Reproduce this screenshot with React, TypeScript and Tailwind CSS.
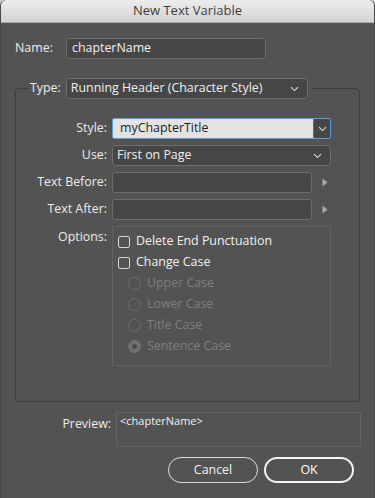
import React from "react";

const FONT = { fontFamily: "'Open Sans', 'Noto Sans', sans-serif" };

function Chevron({ className = "" }: { className?: string }) {
  return (
    <svg className={className} width="9" height="6" viewBox="0 0 9 6" fill="none">
      <path d="M1 1.2 L4.5 4.6 L8 1.2" stroke="currentColor" strokeWidth="1.1" />
    </svg>
  );
}

function Arrow() {
  return (
    <svg width="6" height="9" viewBox="0 0 6 9">
      <path d="M0.5 0.5 L5.5 4.5 L0.5 8.5 Z" fill="#a9a9a9" />
    </svg>
  );
}

function DarkSelect({ value, width }: { value: string; width: string }) {
  return (
    <div
      className={`flex h-[21px] ${width} items-center justify-between rounded-[4px] border border-[#6e6e6e] bg-[#464646] pl-[4px] pr-[8px] text-[12.4px] text-[#f0f0f0]`}
    >
      <span>{value}</span>
      <Chevron className="text-[#dcdcdc]" />
    </div>
  );
}

function Field() {
  return <div className="h-[21px] w-[200px] rounded-[3px] border border-[#6e6e6e] bg-[#464646]" />;
}

function Label({ children }: { children: React.ReactNode }) {
  return <span className="w-[91px] shrink-0 text-right text-[12.4px] text-[#ececec]">{children}</span>;
}

function Check({ label }: { label: string }) {
  return (
    <div className="flex h-[21px] items-center gap-[6px] pl-[5px]">
      <span className="h-[12px] w-[12px] rounded-[2px] border border-[#d6d6d6]" />
      <span className="text-[12.4px] text-[#f2f2f2]">{label}</span>
    </div>
  );
}

function Radio({ label, on }: { label: string; on?: boolean }) {
  return (
    <div className="flex h-[21px] items-center gap-[6px] pl-[15px]">
      {on ? (
        <span className="flex h-[13px] w-[13px] items-center justify-center rounded-full bg-[#707070]">
          <span className="h-[5px] w-[5px] rounded-full bg-[#4c4c4c]" />
        </span>
      ) : (
        <span className="h-[13px] w-[13px] rounded-full border border-[#6c6c6c]" />
      )}
      <span className="text-[12.4px] text-[#7e7e7e]">{label}</span>
    </div>
  );
}

export default function App() {
  return (
    <div className="h-[498px] w-[375px] bg-[#cfcfcf]" style={FONT}>
      <div className="flex h-[498px] w-[375px] flex-col overflow-hidden rounded-t-[6px] border-x border-[#484848] bg-[#535353]">
        <div className="flex h-[23px] shrink-0 items-center justify-center border-b border-[#a9a9a9] bg-gradient-to-b from-[#ececec] to-[#d4d4d4] text-[13px] text-[#3e3e3e]">
          New Text Variable
        </div>

        <div className="mt-[15px] flex items-center">
          <span className="ml-[14px] w-[51px] text-[12.4px] text-[#ececec]">Name:</span>
          <div className="flex h-[21px] w-[200px] items-center rounded-[4px] border border-[#6e6e6e] bg-[#464646] pl-[5px] text-[12.4px] text-[#f0f0f0]">
            chapterName
          </div>
        </div>

        <fieldset className="ml-[14px] mt-[19px] w-[345px] rounded-[4px] border border-[#3f3f3f] px-0 pb-[35px] pt-[19px]">
          <legend className="ml-[13px] pl-[1px] pr-[4px]">
            <div className="flex items-center gap-[5px]">
              <span className="text-[12.4px] text-[#ececec]">Type:</span>
              <DarkSelect value="Running Header (Character Style)" width="w-[242px]" />
            </div>
          </legend>

          <div className="flex flex-col gap-[6px]">
            <div className="flex items-center gap-[5px]">
              <Label>Style:</Label>
              <div className="flex h-[21px] w-[219px] overflow-hidden rounded-[2px] border border-[#5a9ee0]">
                <div className="flex flex-1 items-center bg-[#e3e3e3] pl-[7px] text-[12.4px] text-[#1f1f1f]">
                  myChapterTitle
                </div>
                <div className="flex w-[17px] items-center justify-center border-l border-[#6a6a6a] bg-[#474747]">
                  <Chevron className="text-[#dcdcdc]" />
                </div>
              </div>
            </div>

            <div className="flex items-center gap-[5px]">
              <Label>Use:</Label>
              <DarkSelect value="First on Page" width="w-[219px]" />
            </div>

            <div className="flex items-center gap-[5px]">
              <Label>Text Before:</Label>
              <Field />
              <span className="ml-[5px]">
                <Arrow />
              </span>
            </div>

            <div className="flex items-center gap-[5px]">
              <Label>Text After:</Label>
              <Field />
              <span className="ml-[5px]">
                <Arrow />
              </span>
            </div>

            <div className="flex items-start gap-[5px]">
              <span className="mt-[2px] w-[91px] shrink-0 text-right text-[12.4px] text-[#ececec]">Options:</span>
              <div className="w-[219px] border border-[#626262] pb-[8px] pt-[4px]">
                <Check label="Delete End Punctuation" />
                <Check label="Change Case" />
                <Radio label="Upper Case" />
                <Radio label="Lower Case" />
                <Radio label="Title Case" />
                <Radio label="Sentence Case" on />
              </div>
            </div>
          </div>
        </fieldset>

        <div className="mt-[10px] flex items-start">
          <span className="mt-[3px] w-[110px] shrink-0 text-right text-[12.4px] text-[#ececec]">Preview:</span>
          <div className="ml-[5px] h-[35px] w-[245px] border border-[#626262] px-[3px] text-[11px] text-[#f0f0f0]">
            &lt;chapterName&gt;
          </div>
        </div>

        <div className="mt-[10px] flex justify-end gap-[6px] pr-[20px]">
          <button className="flex h-[26px] w-[90px] items-center justify-center rounded-full border border-[#dedede] text-[12.4px] text-[#f2f2f2]">
            Cancel
          </button>
          <button className="flex h-[26px] w-[90px] items-center justify-center rounded-full border-2 border-[#f4f4f4] text-[12.4px] text-[#ffffff]">
            OK
          </button>
        </div>
      </div>
    </div>
  );
}
